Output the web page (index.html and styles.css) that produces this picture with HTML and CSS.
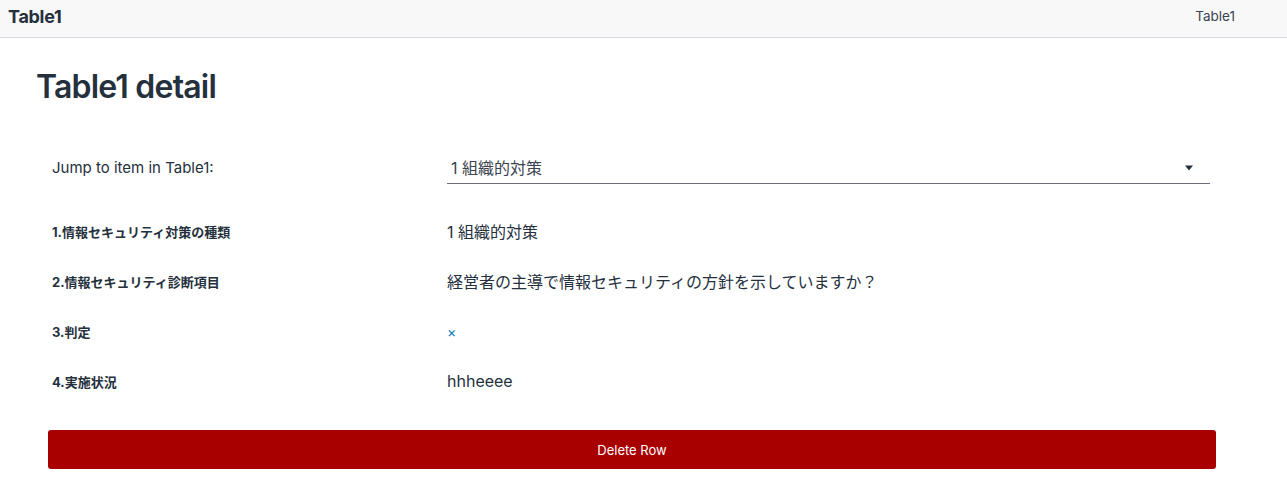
FILE: index.html
```html
<!DOCTYPE html>
<html lang="ja">
<head>
<meta charset="utf-8">
<title>Table1 detail</title>
<link rel="stylesheet" href="styles.css">
</head>
<body>
<header class="topbar">
  <a class="brand" href="#">Table1</a>
  <nav class="nav"><a class="nav-link" href="#">Table1</a></nav>
</header>
<main class="page">
  <h1 class="title">Table1 detail</h1>
  <section class="detail">
    <div class="row jump-row">
      <label class="jump-label">Jump to item in Table1:</label>
      <div class="select">
        <span class="select-value">1 組織的対策</span>
        <svg class="select-arrow" width="10" height="6" viewBox="0 0 10 6"><path d="M1 0.5 L9 0.5 L5 5.5 Z" fill="#25303d"/></svg>
      </div>
    </div>
    <div class="fields">
      <div class="row">
        <div class="label">1.情報セキュリティ対策の種類</div>
        <div class="value">1 組織的対策</div>
      </div>
      <div class="row">
        <div class="label">2.情報セキュリティ診断項目</div>
        <div class="value">経営者の主導で情報セキュリティの方針を示していますか？</div>
      </div>
      <div class="row">
        <div class="label">3.判定</div>
        <div class="value"><a class="link" href="#">×</a></div>
      </div>
      <div class="row">
        <div class="label">4.実施状況</div>
        <div class="value">hhheeee</div>
      </div>
    </div>
    <button class="delete-btn" type="button">Delete Row</button>
  </section>
</main>
</body>
</html>
```

FILE: styles.css
```css
* { box-sizing: border-box; }
html, body { margin: 0; padding: 0; background: #ffffff; }
body {
  font-family: Inter, "Noto Sans CJK JP", sans-serif;
  color: #25303d;
}
a { text-decoration: none; color: inherit; }

.topbar {
  height: 38px;
  background: #f8f8f8;
  border-bottom: 1px solid #d5d8de;
  display: flex;
  align-items: center;
  justify-content: space-between;
  padding: 0 52px 0 8px;
}
.brand {
  font-size: 18px;
  font-weight: 700;
  letter-spacing: -0.3px;
  color: #25303d;
  line-height: 1;
  margin-top: -4px;
}
.nav-link {
  font-size: 13.5px;
  color: #3a4350;
  margin-top: -6px;
  display: block;
}

.page {
  padding: 30px 71px 0 36px;
}
.title {
  margin: 0;
  font-size: 32px;
  font-weight: 600;
  line-height: 38px;
  letter-spacing: -0.8px;
  color: #25303d;
}

.detail {
  margin-top: 36px;
  margin-left: 12px;
}
.row {
  display: grid;
  grid-template-columns: 395px 1fr;
  align-items: center;
  height: 50px;
  padding: 0 6px 0 4px;
}
.jump-label {
  font-size: 15px;
  color: #25303d;
}
.select {
  height: 33px;
  margin-top: 1px;
  border-bottom: 1px solid #6b7078;
  display: flex;
  align-items: center;
  justify-content: space-between;
  padding: 0 16px 0 4px;
}
.select-value {
  font-size: 16px;
  color: #3a4350;
}
.select-arrow { display: block; margin-top: 1px; }

.fields { margin-top: 14px; }
.label {
  font-size: 13px;
  font-weight: 700;
  color: #25303d;
}
.value {
  font-size: 16px;
  color: #25303d;
  margin-top: -1px;
}
.value-latin { letter-spacing: -0.3px; }
.link {
  color: #0a7ab8;
  font-size: 14px;
}

.delete-btn {
  display: block;
  width: 1168px;
  height: 39px;
  margin-top: 24px;
  border: none;
  border-radius: 3px;
  background: #a80000;
  color: #ffffff;
  font-family: Inter, sans-serif;
  font-size: 13px;
}
```
